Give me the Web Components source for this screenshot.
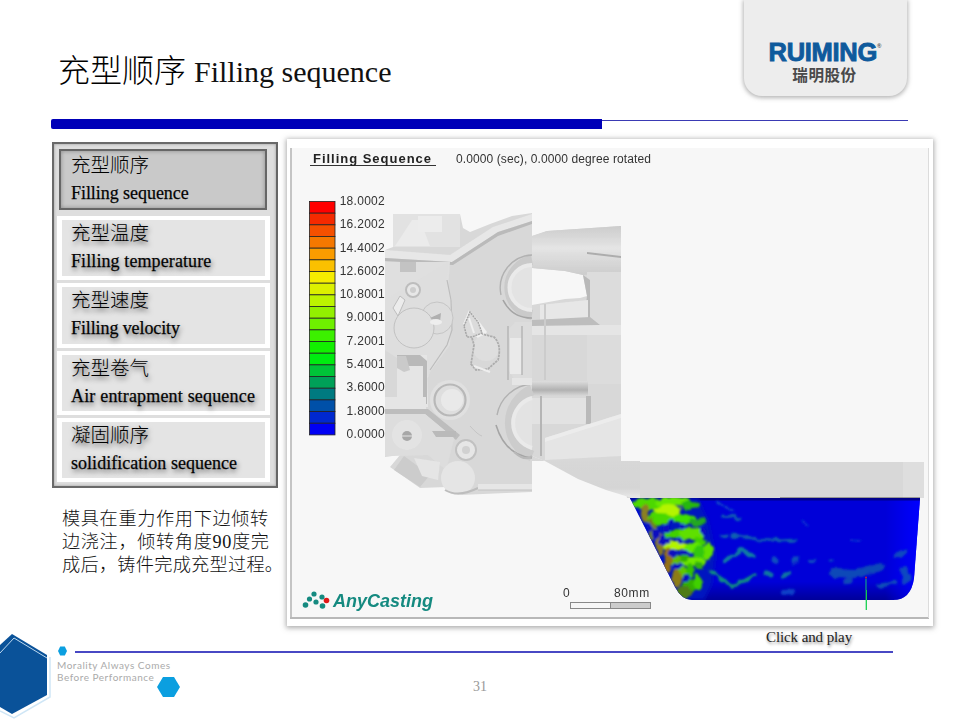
<!DOCTYPE html>
<html lang="zh">
<head>
<meta charset="utf-8">
<title>Filling sequence</title>
<style>
html,body{margin:0;padding:0;background:#fff}
body{font-family:"Liberation Serif","Noto Sans CJK SC",serif}
</style>
</head>
<body>
<filling-slide>
  <slide-header slot="header"></slide-header>
  <nav-panel slot="nav">
    <nav-item active><span slot="cn">充型顺序</span><span slot="en" style="letter-spacing:-.05px">Filling sequence</span></nav-item>
    <nav-item><span slot="cn">充型温度</span><span slot="en" style="letter-spacing:.1px">Filling temperature</span></nav-item>
    <nav-item><span slot="cn">充型速度</span><span slot="en" style="letter-spacing:-.1px">Filling velocity</span></nav-item>
    <nav-item><span slot="cn">充型卷气</span><span slot="en" style="letter-spacing:.18px">Air entrapment sequence</span></nav-item>
    <nav-item><span slot="cn">凝固顺序</span><span slot="en" style="letter-spacing:.03px">solidification sequence</span></nav-item>
  </nav-panel>
  <span slot="note"><span style="letter-spacing:.62px">模具在重力作用下边倾转</span><br><span style="letter-spacing:.62px">边浇注，倾转角度90度完</span><br><span style="letter-spacing:.25px">成后，铸件完成充型过程。</span></span>
  <sim-view slot="sim"></sim-view>
  <slide-footer slot="footer"></slide-footer>
</filling-slide>

<script>
const CJK = '"Liberation Serif","Noto Sans CJK SC",serif';

class FillingSlide extends HTMLElement{
  constructor(){super();this.attachShadow({mode:'open'}).innerHTML=`
  <style>
  :host{display:grid;width:960px;height:720px;overflow:hidden;background:#fff;
    grid-template-rows:119px 10px 10px 487px 1fr;grid-template-columns:1fr}
  .rule{grid-row:2;display:flex;padding-left:51px;padding-right:52px}
  .thick{width:551px;height:10px;background:#0000b8;border-radius:2px 0 0 2px}
  .thin{flex:1;height:1px;margin-top:1px;background:#3a3ab4}
  main{grid-row:4;display:grid;grid-template-columns:226px 646px;column-gap:9px;padding-left:52px}
  .left{display:flex;flex-direction:column;padding-top:3px}
  .note{margin:20px 0 0 10px;font:300 18.2px/23px ${CJK};color:#111;white-space:nowrap}
  footer{grid-row:5}
  </style>
  <slot name="header"></slot>
  <div class="rule"><div class="thick"></div><div class="thin"></div></div>
  <main>
    <div class="left"><slot name="nav"></slot><div class="note"><slot name="note"></slot></div></div>
    <slot name="sim"></slot>
  </main>
  <footer><slot name="footer"></slot></footer>`;}
}

class SlideHeader extends HTMLElement{
  constructor(){super();this.attachShadow({mode:'open'}).innerHTML=`
  <style>
  :host{display:flex;justify-content:space-between;align-items:flex-start;height:119px;padding:0 53px 0 58px;box-sizing:border-box}
  h1{margin:50px 0 0;font:300 32px/42px ${CJK};color:#000;white-space:nowrap}
  h1 .en{font-family:"Liberation Serif",serif;font-weight:400;font-size:30px;letter-spacing:0;margin-left:8px;color:#111}
  .logo{width:163px;height:96px;box-sizing:border-box;background:#ededed;border-radius:0 0 18px 18px;
    box-shadow:0 1px 4px 1px rgba(110,110,110,.5);display:flex;flex-direction:column;align-items:center;padding-top:39px}
  .brand{font:700 25.5px/26px "Liberation Sans",sans-serif;color:#0f5a9c;letter-spacing:-.3px;
    -webkit-text-stroke:.9px #0f5a9c;position:relative;left:-.5px}
  .brand sup{font-size:6px;line-height:0;vertical-align:13px;letter-spacing:0;-webkit-text-stroke:0;color:#555}
  .cn{font:700 15.6px/20px "Noto Sans CJK SC",sans-serif;color:#4a4a4a;margin-top:-1px;letter-spacing:.5px;position:relative;left:-1px}
  </style>
  <h1>充型顺序<span class="en">Filling sequence</span></h1>
  <div class="logo"><div class="brand">RUIMING<sup>®</sup></div><div class="cn">瑞明股份</div></div>`;}
}

class NavPanel extends HTMLElement{
  constructor(){super();this.attachShadow({mode:'open'}).innerHTML=`
  <style>
  :host{display:grid;box-sizing:border-box;width:226px;height:346px;padding:5px 6px 4px 3px;row-gap:3px;
    grid-auto-rows:1fr;border:2px solid #6a6a6a;border-right-color:#666;background:#dedede;
    box-shadow:inset 0 0 3px #999}
  </style><slot></slot>`;}
}

class NavItem extends HTMLElement{
  constructor(){super();this.attachShadow({mode:'open'}).innerHTML=`
  <style>
  :host{display:block;box-sizing:border-box;padding:4px 5px;background:#fff;color:#000;min-height:0}
  .in{box-sizing:border-box;height:100%;background:#e4e4e4;padding:0 0 1px 9px;display:flex;flex-direction:column;justify-content:center;
     text-shadow:1px 3px 5px rgba(0,0,0,.62)}
  .cn{font:300 19.5px/26px ${CJK};white-space:nowrap;margin-bottom:2px}
  .en{font:400 18px/25px "Liberation Serif",serif;white-space:nowrap;-webkit-text-stroke:.25px #111}
  :host([active]){background:transparent;padding:0 3px 0 2px;margin:0 0 3px 0}
  :host([active]) .in{background:#c9c9c9;border:2px solid #666;box-shadow:inset 0 0 4px #8a8a8a;text-shadow:none;padding-left:10px}
  </style>
  <div class="in"><div class="cn"><slot name="cn"></slot></div><div class="en"><slot name="en"></slot></div></div>`;}
}

class ColorLegend extends HTMLElement{
  constructor(){super();
    const vals=['18.0002','16.2002','14.4002','12.6002','10.8001','9.0001','7.2001','5.4001','3.6000','1.8000','0.0000'];
    this.attachShadow({mode:'open'}).innerHTML=`
  <style>
  :host{display:flex;flex-direction:column;width:46px}
  span{display:block;height:23.3px;text-align:right;font:12px/23.3px "Liberation Sans",sans-serif;letter-spacing:.28px;color:#333}
  </style>${vals.map(v=>`<span>${v}</span>`).join('')}`;}
}

class SimView extends HTMLElement{
  constructor(){super();
    const cols=['#ff0000','#f52a00','#f55000','#f57800','#fa9c00','#fac000','#f6ec00','#dcf000','#bdf400','#93f000','#6ff000','#3cf000','#12f000','#00ec10','#00c438','#00a058','#007a80','#0050a8','#0028d0','#0000f4'];
    let bar='';
    cols.forEach((c,i)=>{bar+=`<rect x="309.5" y="${(201.5+i*11.67).toFixed(2)}" width="25.5" height="11.67" fill="${c}" stroke="#222" stroke-width=".8"/>`;});
    const B=(x,y,rx,ry,c,r=0)=>`<ellipse cx="${x}" cy="${y}" rx="${rx}" ry="${ry}" fill="${c}" transform="rotate(${r} ${x} ${y})"/>`;
    const wedge=[
      [650,504,18,6,'#4ed800'],[672,502,18,5,'#66e800'],[668,511,14,6,'#b4f400'],[690,505,10,4,'#28b810'],
      [660,519,14,6,'#48d800'],[684,519,13,6,'#40e000'],[697,522,9,4,'#22a820'],
      [674,534,11,5,'#40d000'],[692,534,12,7,'#5ee000'],[700,541,6,4,'#40d000'],
      [675,546,15,4,'#b4f400'],[695,548,10,5,'#60e800'],
      [703,552,9,7,'#30c810'],[708,552,5,9,'#60e000'],[693,562,13,5,'#70e800'],[684,558,5,4,'#30b000'],
      [675,560,5,6,'#60c000'],[682,572,6,5,'#60c800'],[690,570,4,7,'#30c000'],[690,585,7,7,'#30b000'],[698,583,4,8,'#40d000'],
      [699,566,4,4,'#30b010'],
      [645,514,4,10,'#8a8020'],[652,528,4,11,'#70801c'],[660,544,4,12,'#8a7c1c'],[668,560,4,13,'#947018'],[677,578,5,10,'#8c7c18'],[684,592,8,6,'#507c18']
    ].map(a=>B(...a)).join('');
    const holes=[[650,528,3,5],[656,534,4,5],[667,529,4,4],[668,541,3,3],[680,541,4,3],[686,553,5,3],[663,540,3,6],[672,553,3,4],[678,565,4,3],[686,578,3,4],[682,527,3,2],[703,531,3,3],[672,522,3,2]]
      .map(a=>B(a[0],a[1],a[2],a[3],'#0a10c0')).join('');
    const streak=(d,c,w)=>`<path d="${d}" fill="none" stroke="${c}" stroke-width="${w}" stroke-linecap="round" stroke-linejoin="round"/>`;
    const streaks=[
      ['M717 502L733 511','#0c48c8',2.5],['M724 516L740 519','#0e60b0',3],
      ['M733 535L757 539L783 541L796 540','#0e60b0',3],['M722 537L728 536','#0e60b0',3],
      ['M740 550L755 557','#0e80a0',4],['M725 560L740 553','#0e80a0',4],
      ['M711 571L733 587L755 575','#0c9080',3.5],['M766 574L770 575','#0e78a0',5],['M783 578L790 573','#0e78a0',4],
      ['M773 560L776 560','#0e50c0',5],['M793 560L797 560','#0e50c0',5],['M811 560L814 560','#0e50c0',4],['M830 561L832 561','#0e50c0',3],
      ['M793 591L783 592','#0a40c8',4],['M803 521L808 525','#0a30d0',3],
      ['M835 573L855 574L880 567','#1048b8',8],['M845 582L850 580','#1048b8',5],
      ['M878 586L895 583','#1050b8',4],['M904 570L906 580','#1048c0',7],['M898 555L903 552','#1048c0',6],
      ['M850 539L860 540','#0a30d0',2]
    ].map(a=>streak(...a)).join('');

    const body="M630 498H920L914 578Q911 600 893 600H692Q682 600 675 587Z";
    this.attachShadow({mode:'open'}).innerHTML=`
  <style>
  :host{display:block;position:relative;width:646px;height:487px;background:#fff;box-shadow:0 1px 5px 1px rgba(90,90,90,.5)}
  svg{position:absolute;left:0;top:0;width:646px;height:487px;display:block}
  .abs{position:absolute}
  .t{font:bold 13px/16px "Liberation Sans",sans-serif;letter-spacing:.98px;color:#222;left:26px;top:12px;white-space:nowrap;filter:blur(.25px)}
  .s{font:12px/16px "Liberation Sans",sans-serif;color:#333;left:169px;top:12px;letter-spacing:.1px;white-space:nowrap;filter:blur(.25px)}
  color-legend{left:52px;top:51px;filter:blur(.25px)}
  .any{font:italic 700 18px/22px "Liberation Sans",sans-serif;color:#158a80;left:46px;top:451px;white-space:nowrap;filter:blur(.25px)}
  .sc{font:12px/14px "Liberation Sans",sans-serif;color:#333;top:447px;letter-spacing:.6px;filter:blur(.25px)}
  </style>
  <svg viewBox="287 139 646 487" xmlns="http://www.w3.org/2000/svg" aria-hidden="true">
   <defs>
    <filter id="b5" x="-5%" y="-5%" width="110%" height="110%">
      <feColorMatrix type="matrix" values=".965 0 0 0 0 0 .965 0 0 0 0 0 .965 0 0 0 0 0 1 0"/>
      <feGaussianBlur stdDeviation=".55"/>
    </filter>
    <filter id="mott" x="-10%" y="-10%" width="120%" height="120%">
      <feTurbulence type="fractalNoise" baseFrequency=".11" numOctaves="2" seed="7" result="n"/>
      <feDisplacementMap in="SourceGraphic" in2="n" scale="7" xChannelSelector="R" yChannelSelector="G"/>
      <feGaussianBlur stdDeviation="1.1"/>
    </filter>
    <filter id="b2" x="-20%" y="-20%" width="140%" height="140%"><feGaussianBlur stdDeviation="2"/></filter>
    <clipPath id="bc"><path d="${body}"/></clipPath>
    <linearGradient id="blue" x1="0" y1="0" x2="0" y2="1"><stop offset="0" stop-color="#0000d8"/><stop offset=".82" stop-color="#0000d8"/><stop offset="1" stop-color="#00009a"/></linearGradient>
    <linearGradient id="blueR" x1="0" y1="0" x2="1" y2="0"><stop offset=".88" stop-color="#0000ff" stop-opacity="0"/><stop offset="1" stop-color="#0000ff"/></linearGradient>
    <linearGradient id="tube" x1="0" y1="0" x2="0" y2="1"><stop offset="0" stop-color="#cfcfcf"/><stop offset=".45" stop-color="#e8e8e8"/><stop offset="1" stop-color="#cfcfcf"/></linearGradient>
    <linearGradient id="dk" x1="0" y1="0" x2="0" y2="1"><stop offset="0" stop-color="#e0e0e0"/><stop offset=".6" stop-color="#b4b4b4"/><stop offset="1" stop-color="#dcdcdc"/></linearGradient>
    <linearGradient id="nose" x1="0" y1="0" x2="0" y2="1"><stop offset="0" stop-color="#dcdcdc"/><stop offset=".75" stop-color="#d8d8d8"/><stop offset="1" stop-color="#ececec"/></linearGradient>
   </defs>
   <rect x="292" y="148" width="636" height="469" fill="#f7f7f7"/>
   <rect x="290" y="148" width="2" height="471" fill="#c4c4c4"/>
   <rect x="290" y="617" width="639" height="2" fill="#b8b8b8"/>
   <rect x="928" y="148" width="1" height="470" fill="#dcdcdc"/>
   <path d="M310 165.5H436" stroke="#333" stroke-width="1"/>
   ${bar}
   <g filter="url(#b5)">
    <path d="M621 462H924L920 498H627Z" fill="#dcdcdc"/>
    <rect x="903" y="462" width="21" height="36" fill="#e2e2e2"/>
    <path d="M780 498H920" stroke="#555" stroke-width="1.2"/>
    <path d="M532 456L543 460L578 479L606 490L632 498L640 498V461H532Z" fill="url(#nose)"/>
    <path d="M532 236L547 231L621 226V461L545 461L532 456V305L565 299L580 298L587 296L583 275L565 271L532 268Z" fill="#dcdcdc"/>
    <path d="M532 236L547 231L621 226V272L583 275L565 271L532 268Z" fill="url(#tube)"/>
    <path d="M587 252L621 256V258L587 254Z" fill="#b0b0b0"/>
    <rect x="587" y="272" width="34" height="112" fill="#e0e0e0"/>
    <path d="M583 275L590 280L590 318L584 320L587 296Z" fill="#bcbcbc"/>
    <path d="M540 305L588 300V318L540 320Z" fill="#ebebeb"/>
    <path d="M532 325H621V335H532Z" fill="#e9e9e9"/>
    <path d="M532 320L590 317L600 325L532 326Z" fill="#c0c0c0"/>
    <path d="M532 381H588V396H532Z" fill="url(#dk)"/>
    <path d="M532 398H586V420L585 424H532Z" fill="#e5e5e5"/>
    <path d="M586 396H591V424H586Z" fill="#bcbcbc"/>
    <rect x="540" y="396" width="2" height="60" fill="#b8b8b8"/>
    <path d="M545 438L621 414V456L545 460Z" fill="#e8e8e8"/>
    <path d="M545 438L621 414V418L545 442Z" fill="#f0f0f0"/>
    <rect x="544" y="304" width="2" height="76" fill="#cfcfcf"/>
    <path d="M393 214H460L463 228L470 232L490 224L512 216L532 213V492L460 495L447 487L420 488L390 467L400 455L385 457V250L393 247Z" fill="#dcdcdc"/>
    <path d="M393 214H460V247H393Z" fill="#e5e5e5"/>
    <path d="M395 246L412 220H420L430 246Z" fill="#efefef"/>
    <rect x="418" y="216" width="24" height="16" fill="#f0f0f0"/>
    <path d="M385 250L450 255L493 227L532 214V221L498 232L452 262L385 258Z" fill="#ebebeb"/>
    <path d="M385 258L452 262L498 232L532 221V224L498 236L453 265L385 261Z" fill="#bdbdbd"/>
    <path d="M385 262H450L447 300L385 300Z" fill="#e3e3e3"/>
    <rect x="400" y="262" width="16" height="10" fill="#c6c6c6"/>
    <path d="M448 262V272L446 280L452 300L450 345L430 372L428 378L385 350V300" fill="#e2e2e2"/>
    <path d="M447 280L451 300L452 330L447 345L430 370" fill="none" stroke="#bfbfbf" stroke-width="1.2"/>
    <circle cx="413" cy="290" r="7" fill="#ebebeb" stroke="#c0c0c0" stroke-width="2"/>
    <circle cx="413" cy="290" r="3" fill="#d0d0d0"/>
    <path d="M393 308L400 296L405 300L398 316Z" fill="#f0f0f0" stroke="#c0c0c0"/>
    <circle cx="437" cy="318" r="16" fill="#e1e1e1" stroke="#c8c8c8"/>
    <circle cx="414" cy="328" r="20" fill="#e3e3e3" stroke="#c4c4c4"/>
    <path d="M430 318L441 313L440 322Z" fill="#b2b2b2"/>
    <ellipse cx="436" cy="322" rx="6" ry="3" fill="#f2f2f2"/>
    <path d="M397 355H427L428 407H397Z" fill="#e8e8e8"/>
    <path d="M397 355H420L427 361V404H423V366H397Z" fill="#bcbcbc"/>
    <path d="M397 356H406L410 370L404 372L397 368Z" fill="#cdcdcd"/>
    <rect x="385" y="397" width="41" height="12" fill="#e9e9e9"/>
    <path d="M385 409H428L460 435L456 440L425 414H385Z" fill="#c0c0c0"/>
    <path d="M385 414H425L454 438L446 470L428 455L385 456Z" fill="#e1e1e1"/>
    <circle cx="407" cy="435" r="15" fill="#e6e6e6"/>
    <circle cx="407" cy="436" r="5" fill="#aaaaaa"/>
    <path d="M402 436H412" stroke="#e8e8e8"/>
    <path d="M432 431H456V437H436Z" fill="#bdbdbd"/>
    <circle cx="450" cy="400" r="20" fill="#e4e4e4"/>
    <circle cx="450" cy="400" r="15.5" fill="#e2e2e2" stroke="#bbb" stroke-width="2.2"/>
    <circle cx="452" cy="400" r="11" fill="#ededed"/>
    <path d="M470 426Q478 435 482 436" stroke="#c8c8c8" fill="none"/>
    <circle cx="466" cy="450" r="10" fill="#eaeaea" stroke="#c4c4c4" stroke-width="2"/>
    <circle cx="466" cy="450" r="4" fill="#d4d4d4"/>
    <path d="M458 462L462 470" stroke="#b8b8b8" stroke-width="2"/>
    <path d="M404 456L430 475L420 487L394 470Z" fill="#cfcfcf"/>
    <path d="M414 458L440 462L438 480L422 476Z" fill="#e8e8e8"/>
    <circle cx="458" cy="478" r="17" fill="#e8e8e8"/>
    <path d="M445 490Q458 498 478 488" stroke="#c0c0c0" stroke-width="2" fill="none"/>
    <path d="M478 484H532V490H478Z" fill="#eaeaea"/>
    <path d="M478 490H532" stroke="#c4c4c4" stroke-width="1.2"/>
    <path d="M463 324L469 310L478 320L487 332L480 340" fill="#f4f4f4"/>
    <path d="M464 326L470 312L478 322L482 333L472 337L467 337Z" fill="#dedede" stroke="#a8a8a8" stroke-width="1.5" stroke-dasharray="2 .8"/>
    <path d="M469 318L474 333" stroke="#f4f4f4" stroke-width="2"/>
    <circle cx="486" cy="348" r="13" fill="#e2e2e2"/>
    <path d="M472 338L474 345Q472 358 471 364L476 370L488 369L498 360Q502 345 494 337L482 334" fill="none" stroke="#b0b0b0" stroke-width="1.8" stroke-dasharray="2.500 .8"/>
    <path d="M474 366L490 372" stroke="#f2f2f2" stroke-width="2"/>
    <path d="M532 260A28 28 0 0 0 532 315" fill="#ebebeb" stroke="#cdcdcd" stroke-width="10"/>
    <path d="M532 265A22 22 0 0 0 532 310" fill="#e6e6e6" stroke="#eeeeee" stroke-width="4"/>
    <path d="M532 255A33 33 0 0 0 501 295" fill="none" stroke="#b4b4b4" stroke-width="1.4"/>
    <path d="M503 300Q512 318 532 318" fill="none" stroke="#a8a8a8" stroke-width="1.6"/>
    <path d="M515 322H532V380H515L508 370V330Z" fill="#dfdfdf"/>
    <rect x="510" y="338" width="12" height="36" fill="#eeeeee"/>
    <path d="M508 326V380" stroke="#b8b8b8" stroke-width="1.5"/>
    <path d="M522 326V375" stroke="#b8b8b8" stroke-width="1.5"/>
    <path d="M532 390A36 36 0 0 0 532 456" fill="#ebebeb" stroke="#cfcfcf" stroke-width="11"/>
    <path d="M532 398A26 26 0 0 0 532 448" fill="#e6e6e6" stroke="#eeeeee" stroke-width="4"/>
    <path d="M532 384A38 38 0 0 0 497 415" fill="none" stroke="#b4b4b4" stroke-width="1.4"/>
    <path d="M496 425Q505 455 532 458" fill="none" stroke="#a8a8a8" stroke-width="1.6"/>
    <rect x="512" y="378" width="20" height="7" fill="#e8e8e8"/>
    <path d="M514 452Q525 462 532 456" fill="none" stroke="#bbb" stroke-width="2"/>
   </g>
   <path d="${body}" fill="url(#blue)"/>
   <path d="${body}" fill="url(#blueR)"/>
   <g clip-path="url(#bc)">
     <rect x="625" y="498" width="300" height="2.5" fill="#00008c"/>
     <path d="M630 498H698L708 520L716 555L712 585L704 600H680Z" fill="#0018c0" filter="url(#b2)"/>
     <g filter="url(#mott)">${wedge}${holes}${streaks}</g>
   </g>
   <path d="M866 578.5V590" stroke="#10908c" stroke-width="1.3"/>
   <path d="M866.3 590V610" stroke="#18d050" stroke-width="1.3"/>
   <circle cx="866" cy="577.5" r="1" fill="#c02040"/>
   <g fill="#158a80">
     <circle cx="314" cy="594" r="2.6"/><circle cx="309.5" cy="599" r="2.6"/><circle cx="305.5" cy="605" r="2.8"/>
     <circle cx="316" cy="602" r="2.6"/><circle cx="322" cy="597" r="2.6"/><circle cx="322.5" cy="606" r="2.8"/>
   </g>
   <circle cx="326.5" cy="600.5" r="2.8" fill="#e01818"/>
   <rect x="570.5" y="602.5" width="40" height="6" fill="#f6f6f6" stroke="#888"/>
   <rect x="610.5" y="602.5" width="40" height="6" fill="#cccccc" stroke="#888"/>
  </svg>
  <div class="abs t">Filling Sequence</div>
  <div class="abs s">0.0000 (sec), 0.0000 degree rotated</div>
  <color-legend class="abs"></color-legend>
  <div class="abs any">AnyCasting</div>
  <div class="abs sc" style="left:276px">0</div>
  <div class="abs sc" style="left:327px">80mm</div>`;}
}

class SlideFooter extends HTMLElement{
  constructor(){super();this.attachShadow({mode:'open'}).innerHTML=`
  <style>
  :host{display:grid;grid-template-columns:57px 1fr;grid-template-rows:16px 11px 1fr;height:94px;box-sizing:border-box;padding-top:3px}
  .hex{grid-row:1 / 4;grid-column:1;align-self:start;display:block}
  .cap{grid-column:2;grid-row:1;padding-left:709px;font:400 15px/16px "Liberation Serif",serif;color:#222;letter-spacing:-.1px;text-shadow:1px 2px 3px rgba(0,0,0,.45);white-space:nowrap}
  .line{grid-column:2;grid-row:2;display:flex;align-items:center;padding:2px 67px 0 1px}
  .line svg{display:block;margin:-1px 8px 0 0}
  .line i{display:block;flex:1;height:2px;background:#4848c4}
  .row{grid-column:2;grid-row:3;display:grid;grid-template-columns:100px 23px 1fr;align-items:start;margin-top:2px}
  .motto{font:400 10px/12px "Lato",sans-serif;letter-spacing:.52px;color:#aaa;white-space:nowrap;margin-top:1px}
  .mini{display:block;margin-top:19px}
  .pg{font:400 14px/16px "Liberation Serif",serif;color:#999;padding-left:293px;margin-top:21px}
  </style>
  <svg class="hex" width="57" height="91" viewBox="0 0 57 91">
    <path d="M0 82L14 89L50 68V28" fill="none" stroke="#cfe6f6" stroke-width="1.5"/>
    <path d="M0 16L12 5L47 26V66L12 85L0 78Z" fill="#0a5299"/>
    <path d="M0 24L14 9L47 29" fill="none" stroke="#bcd8ef" stroke-width="1"/>
  </svg>
  <div class="cap">Click and play</div>
  <div class="line"><svg width="9" height="10" viewBox="0 0 9 10"><path d="M2.200 .5H6.800L9 5L6.800 9.500H2.200L0 5Z" fill="#0b9fe0"/></svg><i></i></div>
  <div class="row">
    <div class="motto">Morality Always Comes<br>Before Performance</div>
    <svg class="mini" width="23" height="20" viewBox="0 0 23 20"><path d="M6 0H17L23 10L17 20H6L0 10Z" fill="#0b9fe0"/></svg>
    <div class="pg">31</div>
  </div>`;}
}

customElements.define('color-legend',ColorLegend);
customElements.define('nav-item',NavItem);
customElements.define('nav-panel',NavPanel);
customElements.define('sim-view',SimView);
customElements.define('slide-header',SlideHeader);
customElements.define('slide-footer',SlideFooter);
customElements.define('filling-slide',FillingSlide);
</script>
</body>
</html>
